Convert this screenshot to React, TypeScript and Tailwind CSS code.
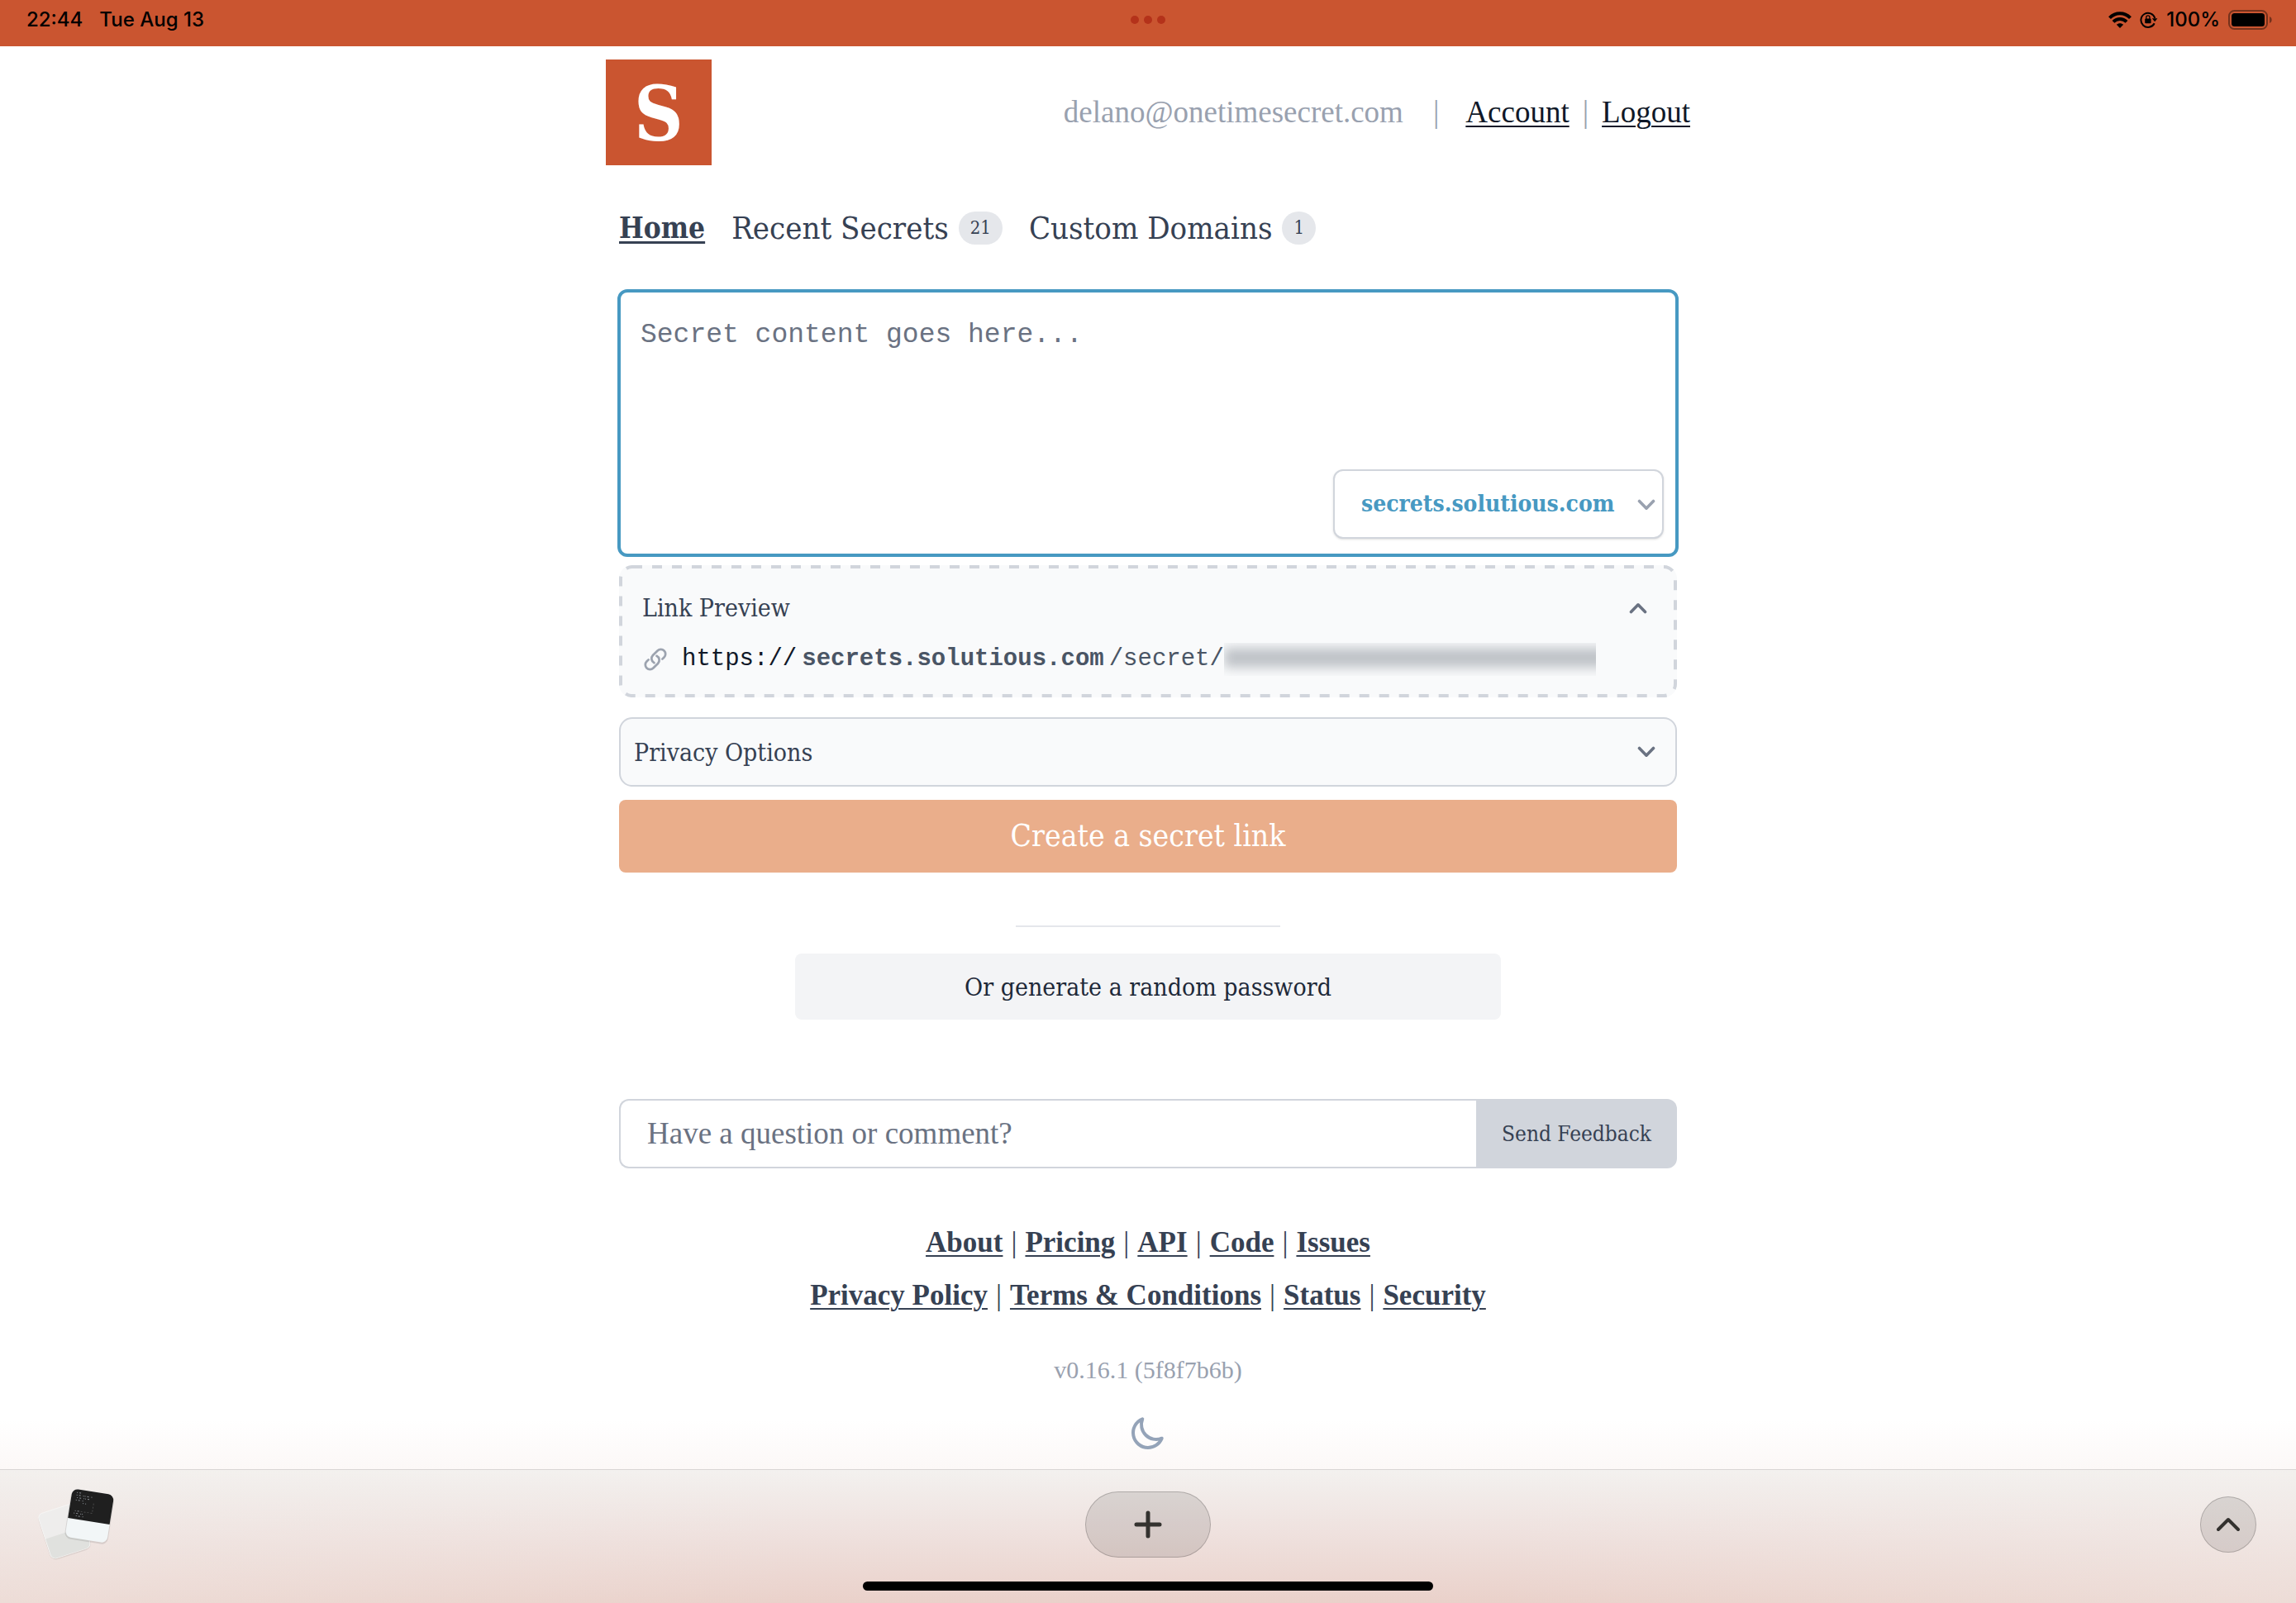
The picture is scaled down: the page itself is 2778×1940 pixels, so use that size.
import { useState } from "react";

const SLAB = "font-['DejaVu_Serif_Condensed','DejaVu_Serif',serif]";
const SERIF = "font-['Liberation_Serif',serif]";
const MONO = "font-['Liberation_Mono',monospace]";

function StatusBar() {
  return (
    <div className="grid h-14 grid-cols-3 bg-[#ca5530] px-8 font-['Inter',sans-serif] text-[24px] font-medium leading-none text-black">
      <div className="flex h-12 items-center gap-5">
        <span>22:44</span>
        <span>Tue Aug 13</span>
      </div>
      <div className="flex h-12 items-center justify-center gap-1.5">
        <span className="size-2.5 rounded-full bg-[#b4321a]" />
        <span className="size-2.5 rounded-full bg-[#b4321a]" />
        <span className="size-2.5 rounded-full bg-[#b4321a]" />
      </div>
      <div className="-mr-1 flex h-12 items-center justify-end gap-2.5">
        <svg width="28" height="20" viewBox="0 0 28 20" fill="none" stroke="#000" strokeWidth="4" aria-label="Wi-Fi">
          <path d="M1.5 7.6C8.5 .5 19.500 .5 26.500 7.600" />
          <path d="M6 12.400c4.500-4.600 11.500-4.600 16 0" />
          <path d="M14 20l-4.200-4.200c2.400-2.200 6-2.200 8.400 0z" fill="#000" stroke="none" />
        </svg>
        <svg width="22" height="20" viewBox="0 0 22 20" fill="none" aria-label="Rotation lock">
          <path d="M17.700 14.200A8.600 8.600 0 1 1 18.300 8" stroke="#000" strokeWidth="2" />
          <path d="M14.800 8.200h6.600l-3.200 4z" fill="#000" />
          <rect x="6.200" y="8.500" width="7.400" height="5.800" rx="1" fill="#000" />
          <path d="M7.800 9V7a2.100 2.100 0 0 1 4.200 0v2" stroke="#000" strokeWidth="1.300" />
        </svg>
        <span>100%</span>
        <svg width="54" height="24" viewBox="0 0 54 24" fill="none" aria-label="Battery full">
          <rect x="1" y="1" width="46" height="22" rx="6.500" stroke="#000" strokeOpacity=".42" strokeWidth="2" />
          <rect x="4" y="4" width="40" height="16" rx="3.500" fill="#000" />
          <path d="M50 8c3.600 1.200 3.600 6.800 0 8z" fill="#000" fillOpacity=".42" />
        </svg>
      </div>
    </div>
  );
}

function Chevron({ up = false, className = "" }: { up?: boolean; className?: string }) {
  return (
    <svg
      width="22"
      height="14"
      viewBox="0 0 22 14"
      fill="none"
      stroke="currentColor"
      strokeWidth="3.600"
      strokeLinecap="round"
      strokeLinejoin="round"
      aria-hidden="true"
      className={className}
    >
      <path d={up ? "M2.500 11.500l8.500-8.700 8.500 8.700" : "M2.500 2.500l8.500 8.700 8.500-8.700"} />
    </svg>
  );
}

function Header() {
  return (
    <header className="flex items-center justify-between px-4 pt-4">
      <a
        href="#home"
        aria-label="Onetime Secret"
        className={`flex size-32 items-center justify-center bg-[#ca5530] pt-1 text-[92px] font-bold leading-none text-white ${SLAB}`}
      >
        S
      </a>
      <div className={`flex items-center text-[37px] leading-10 ${SERIF}`}>
        <span className="text-gray-400">delano@onetimesecret.com</span>
        <span className="ml-9 mr-8 text-gray-400">|</span>
        <a href="#account" className="text-gray-900 underline decoration-2 underline-offset-4">Account</a>
        <span className="mx-4 text-gray-400">|</span>
        <a href="#logout" className="text-gray-900 underline decoration-2 underline-offset-4">Logout</a>
      </div>
    </header>
  );
}

function Count({ children }: { children: number }) {
  return (
    <span className="flex h-10 min-w-10 items-center justify-center rounded-full bg-gray-200 px-3.5 text-[22px] leading-none text-gray-700">
      {children}
    </span>
  );
}

function Nav() {
  return (
    <nav className={`mt-14 flex h-10 items-center gap-8 whitespace-nowrap text-[38px] leading-10 text-gray-700 ${SLAB}`}>
      <a href="#home" className="text-[35px] font-bold underline decoration-[3px] underline-offset-4">Home</a>
      <a href="#recent" className="flex items-center gap-3">Recent Secrets<Count>{21}</Count></a>
      <a href="#domains" className="flex items-center gap-3">Custom Domains<Count>{1}</Count></a>
    </nav>
  );
}

function SecretForm() {
  const [domain, setDomain] = useState("secrets.solutious.com");
  return (
    <form onSubmit={(e) => e.preventDefault()}>
      <div className="relative -mx-0.5 mt-[54px]">
        <textarea
          aria-label="Secret content"
          placeholder="Secret content goes here..."
          className={`block h-[324px] w-full resize-none rounded-xl border-4 border-[#4799c2] bg-white px-6 py-8 text-[33px] leading-10 text-gray-900 outline-none placeholder:text-gray-500 ${MONO}`}
        />
        <div className="absolute bottom-[22px] right-[18px]">
          <select
            aria-label="Domain"
            value={domain}
            onChange={(e) => setDomain(e.target.value)}
            className={`h-[84px] w-[400px] appearance-none rounded-xl border-2 border-gray-300 bg-white pl-8 pr-14 text-[28px] font-bold text-[#4799c2] shadow-sm ${SLAB}`}
          >
            <option>secrets.solutious.com</option>
          </select>
          <Chevron className="pointer-events-none absolute right-2.5 top-9 text-gray-400" />
        </div>
      </div>

      <section className="relative mt-2.5 rounded-2xl bg-gray-50 px-7 pb-[26px] pt-8">
        <svg className="pointer-events-none absolute inset-0 size-full" aria-hidden="true">
          <rect
            x="2"
            y="2"
            rx="14"
            className="h-[calc(100%-4px)] w-[calc(100%-4px)] fill-none stroke-gray-300"
            strokeWidth="4"
            strokeDasharray="12 12"
          />
        </svg>
        <div className="flex h-10 items-center justify-between">
          <h2 className={`text-[30px] leading-10 text-gray-700 ${SLAB}`}>Link Preview</h2>
          <button type="button" aria-label="Collapse link preview" className="mr-2 text-gray-500">
            <Chevron up />
          </button>
        </div>
        <div className={`mt-[22px] flex h-10 items-center text-[29px] leading-10 ${MONO}`}>
          <svg width="32" height="30" viewBox="0 0 24 24" fill="none" stroke="#9ca3af" strokeWidth="2.200" strokeLinecap="round" strokeLinejoin="round" aria-hidden="true">
            <path d="M13.190 8.688a4.500 4.500 0 0 1 1.242 7.244l-4.500 4.500a4.500 4.500 0 0 1-6.364-6.364l1.757-1.757m13.350-.622 1.757-1.757a4.500 4.500 0 0 0-6.364-6.364l-4.500 4.500a4.500 4.500 0 0 0 1.242 7.244" />
          </svg>
          <span className="ml-4 text-gray-900">https://</span>
          <span className="ml-1.5 font-bold text-gray-600">{domain}</span>
          <span className="ml-1.5 text-gray-600">/secret/</span>
          <span className="relative h-10 w-[450px] overflow-hidden">
            <span className="absolute -right-5 left-0 top-1.5 h-6 bg-[#bec2c7] blur-[7px]" />
          </span>
        </div>
      </section>

      <button
        type="button"
        aria-expanded="false"
        className={`mt-6 flex h-[84px] w-full items-center justify-between rounded-2xl border-2 border-gray-300 bg-gray-50 pl-4 pr-6 text-[30px] text-gray-700 ${SLAB}`}
      >
        Privacy Options
        <Chevron className="text-gray-500" />
      </button>

      <button type="submit" className={`mt-4 block h-[88px] w-full rounded-lg bg-[#eaae8b] text-[37px] text-white ${SLAB}`}>
        Create a secret link
      </button>
      <hr className="mx-auto mt-16 w-1/4 border-t-2 border-gray-200" />
      <button type="button" className={`mx-auto mt-8 block h-20 w-2/3 rounded-lg bg-gray-100 text-[30px] text-gray-800 ${SLAB}`}>
        Or generate a random password
      </button>
    </form>
  );
}

function Feedback() {
  return (
    <form className="mt-24 flex h-[84px]" onSubmit={(e) => e.preventDefault()}>
      <input
        type="text"
        aria-label="Feedback"
        placeholder="Have a question or comment?"
        className={`min-w-0 flex-1 rounded-l-xl border-2 border-r-0 border-gray-300 bg-white px-8 text-[37px] text-gray-900 outline-none placeholder:text-gray-500 ${SERIF}`}
      />
      <button type="submit" className={`w-[243px] rounded-r-xl bg-gray-300 text-[26px] text-gray-700 ${SLAB}`}>
        Send Feedback
      </button>
    </form>
  );
}

function LinkRow({ items }: { items: string[] }) {
  return (
    <div className="flex h-16 items-center justify-center">
      {items.map((item, i) => (
        <span key={item} className="flex">
          {i > 0 && <span className="mx-2.5 font-normal">|</span>}
          <a href="#link" className="underline decoration-2 underline-offset-4">{item}</a>
        </span>
      ))}
    </div>
  );
}

function Footer() {
  return (
    <footer className={`text-gray-700 ${SERIF}`}>
      <div className="mt-[58px] text-[35px] font-bold leading-10">
        <LinkRow items={["About", "Pricing", "API", "Code", "Issues"]} />
        <LinkRow items={["Privacy Policy", "Terms & Conditions", "Status", "Security"]} />
      </div>
      <p className="mt-[38px] text-center text-[30px] leading-10 text-gray-400">v0.16.1 (5f8f7b6b)</p>
      <button type="button" aria-label="Switch to dark mode" className="mx-auto mt-8 block">
        <svg width="48" height="48" viewBox="0 0 24 24" fill="none" stroke="#94a3b8" strokeWidth="2" strokeLinecap="round" strokeLinejoin="round">
          <path d="M20.354 15.354A9 9 0 0 1 8.646 3.646 9.003 9.003 0 0 0 12 21a9.003 9.003 0 0 0 8.354-5.646z" />
        </svg>
      </button>
    </footer>
  );
}

function TabThumbnails() {
  return (
    <button type="button" aria-label="Open windows" className="-ml-2">
      <svg width="100" height="112" viewBox="0 0 100 112">
        <g transform="rotate(-18 38 64)">
          <rect x="12" y="35" width="52" height="59" rx="8" fill="#000" opacity=".08" />
          <rect x="13" y="35" width="50" height="57" rx="6" fill="#eeedec" stroke="#f6f5f4" />
          <path d="M13.500 66h49v20a6 6 0 0 1-6 6H19.500a6 6 0 0 1-6-6z" fill="#e0e1de" />
        </g>
        <g transform="rotate(9 68 45)">
          <rect x="42" y="17" width="53" height="60" rx="8" fill="#000" opacity=".1" />
          <rect x="43" y="16" width="51" height="59" rx="7" fill="#f2f6f7" />
          <path d="M43 52V23a7 7 0 0 1 7-7h37a7 7 0 0 1 7 7v29z" fill="#1f1f1f" />
          <g stroke="#8b8f96" strokeWidth="1" strokeDasharray="1 2 2 3 1 1">
            <path d="M49 20h5M49 23h20M50 26h18M49 29h9M58 32h4" />
            <path d="M50 42h6M49 45h12M52 48h9" />
          </g>
          <path d="M57 42h14M71 30v12" stroke="#4a4a4a" strokeDasharray="2 2" />
        </g>
      </svg>
    </button>
  );
}

function BottomBar() {
  return (
    <div className="flex h-[162px] flex-col border-t border-[#d9d5d4] bg-[linear-gradient(to_right,#f2efec60,#f2efec00_35%,#f2efec00_65%,#f2efec60),linear-gradient(to_bottom,#f3f1ef,#efe2df_45%,#ead1ca)] px-12">
      <div className="mb-[3px] grid h-[132px] flex-none grid-cols-3 items-center">
        <TabThumbnails />
        <button
          type="button"
          aria-label="New tab"
          className="flex h-20 w-[152px] items-center justify-center justify-self-center rounded-full border border-black/20 bg-black/10"
        >
          <svg width="34" height="34" viewBox="0 0 34 34" fill="none" stroke="#34322f" strokeWidth="5" strokeLinecap="round">
            <path d="M17 3v28M3 17h28" />
          </svg>
        </button>
        <button
          type="button"
          aria-label="Show tabs"
          className="flex size-[68px] items-center justify-center justify-self-end rounded-full border border-black/20 bg-black/10"
        >
          <svg width="28" height="18" viewBox="0 0 28 18" fill="none" stroke="#34322f" strokeWidth="4" strokeLinecap="round" strokeLinejoin="round">
            <path d="M2 15L14 3l12 12" />
          </svg>
        </button>
      </div>
      <div className="mx-auto h-[11px] w-[690px] rounded-full bg-black" />
    </div>
  );
}

export default function App() {
  return (
    <div className="flex min-h-screen flex-col bg-white">
      <StatusBar />
      <main className="flex-1 bg-[linear-gradient(to_top,#fcf8f7,#ffffff_60px)]">
        <div className="mx-auto w-full max-w-[1344px]">
          <Header />
          <div className="px-8">
            <Nav />
            <SecretForm />
            <Feedback />
            <Footer />
          </div>
        </div>
      </main>
      <BottomBar />
    </div>
  );
}
